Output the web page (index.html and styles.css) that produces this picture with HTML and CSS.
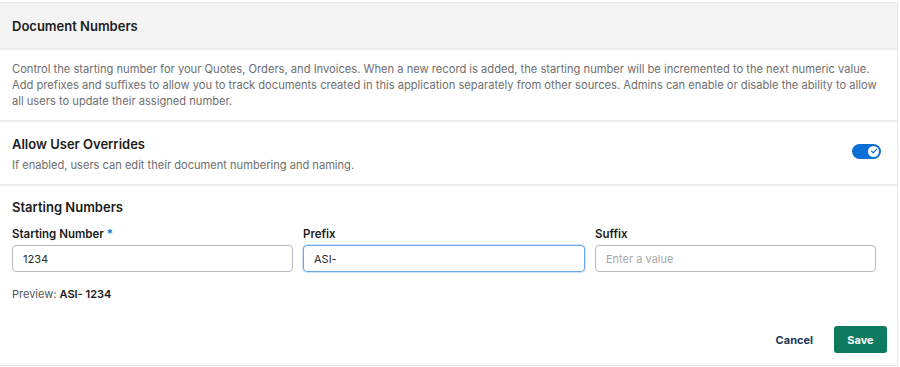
FILE: index.html
```html
<!DOCTYPE html>
<html lang="en">
<head>
  <meta charset="UTF-8">
  <meta name="viewport" content="width=device-width, initial-scale=1">
  <title>Document Numbers</title>
  <link rel="stylesheet" href="styles.css">
</head>
<body>

<div class="panel">

  <div class="panel-header">Document Numbers</div>

  <div class="section intro">
    Control the starting number for your Quotes, Orders, and Invoices. When a new record is added, the starting number will be incremented to the next numeric value.
    Add prefixes and suffixes to allow you to track documents created in this application separately from other sources. Admins can enable or disable the ability to allow
    all users to update their assigned number.
  </div>

  <div class="section overrides">
    <div>
      <div class="section-title">Allow User Overrides</div>
      <div class="hint">If enabled, users can edit their document numbering and naming.</div>
    </div>
    <button class="toggle" aria-label="Allow user overrides">
      <span class="knob">
        <svg width="8" height="8" viewBox="0 0 8 8"><path d="M1.5 4.2 3.2 5.8 6.5 2.3" fill="none" stroke="#0b6fd6" stroke-width="1.2" stroke-linecap="round" stroke-linejoin="round"/></svg>
      </span>
    </button>
  </div>

  <div class="section numbers">
    <div class="section-title">Starting Numbers</div>
    <div class="fields">
      <label class="field">
        <span class="field-label">Starting Number <span class="req">*</span></span>
        <input type="text" value="1234">
      </label>
      <label class="field">
        <span class="field-label">Prefix</span>
        <input type="text" value="ASI-" class="focused">
      </label>
      <label class="field">
        <span class="field-label">Suffix</span>
        <input type="text" placeholder="Enter a value">
      </label>
    </div>
    <div class="preview">Preview: <b>ASI- 1234</b></div>
    <div class="actions">
      <button class="btn-cancel">Cancel</button>
      <button class="btn-save">Save</button>
    </div>
  </div>

</div>

</body>
</html>
```

FILE: styles.css
```css
body {
  margin: 0;
  font-family: 'Inter', 'Noto Sans', sans-serif;
  background: #ffffff;
  color: #1c1c1c;
}
.panel {
  margin: 2px 2px 0 0;
  border: 1px solid #e6e6e6;
  border-left: none;
  height: 364px;
  box-sizing: border-box;
}
.panel-header {
  background: #f4f4f4;
  height: 45px;
  padding: 0 12px;
  display: flex;
  align-items: center;
  font-size: 13px;
  font-weight: 600;
  border-bottom: 2px solid #ececec;
}
.section {
  padding: 0 12px;
  border-bottom: 2px solid #ececec;
}
.intro {
  padding-top: 11px;
  padding-bottom: 11px;
  padding-right: 8px;
  font-size: 11.15px;
  line-height: 16px;
  color: #6e6e6e;
}
.overrides {
  display: flex;
  align-items: center;
  justify-content: space-between;
  height: 64px;
  box-sizing: border-box;
  padding-right: 16px;
}
.section-title {
  font-size: 13px;
  font-weight: 600;
  line-height: 20px;
}
.hint {
  margin-top: 3px;
  font-size: 11.1px;
  color: #6e6e6e;
  line-height: 16px;
}
.toggle {
  width: 29px;
  height: 15px;
  border: none;
  border-radius: 8px;
  background: #0b6fd6;
  padding: 0 2px;
  display: flex;
  align-items: center;
  justify-content: flex-end;
  margin-top: -4px;
}
.knob {
  width: 11px;
  height: 11px;
  border-radius: 50%;
  background: #ffffff;
  display: flex;
  align-items: center;
  justify-content: center;
}
.numbers {
  border-bottom: none;
  padding-top: 11px;
}
.fields {
  display: grid;
  grid-template-columns: 281px 282px 281px;
  column-gap: 10px;
  margin-top: 9px;
}
.field {
  display: flex;
  flex-direction: column;
}
.field-label {
  font-size: 11.5px;
  font-weight: 600;
  line-height: 16px;
  margin-bottom: 3px;
}
.req {
  color: #0b6fd6;
}
.field input {
  height: 27px;
  box-sizing: border-box;
  border: 1px solid #b8b8b8;
  border-radius: 4px;
  padding: 0 10px;
  font-family: inherit;
  font-size: 11px;
  color: #2a2a2a;
  outline: none;
}
.field input::placeholder {
  color: #a8a8a8;
}
.field input.focused {
  border-color: #6aa9e6;
  box-shadow: 0 0 0 1px #cfe4f8;
}
.preview {
  margin-top: 15px;
  font-size: 11px;
  color: #555555;
}
.preview b {
  color: #1c1c1c;
  font-weight: 600;
}
.actions {
  display: flex;
  justify-content: flex-end;
  align-items: center;
  gap: 21px;
  margin-top: 25px;
  margin-right: -2px;
}
.btn-cancel {
  background: none;
  border: none;
  font-family: inherit;
  font-size: 11px;
  font-weight: 700;
  color: #1d3656;
  padding: 0;
}
.btn-save {
  width: 53px;
  height: 27px;
  background: #0e7a5f;
  color: #ffffff;
  border: none;
  border-radius: 3px;
  font-family: inherit;
  font-size: 11px;
  font-weight: 700;
}
```
